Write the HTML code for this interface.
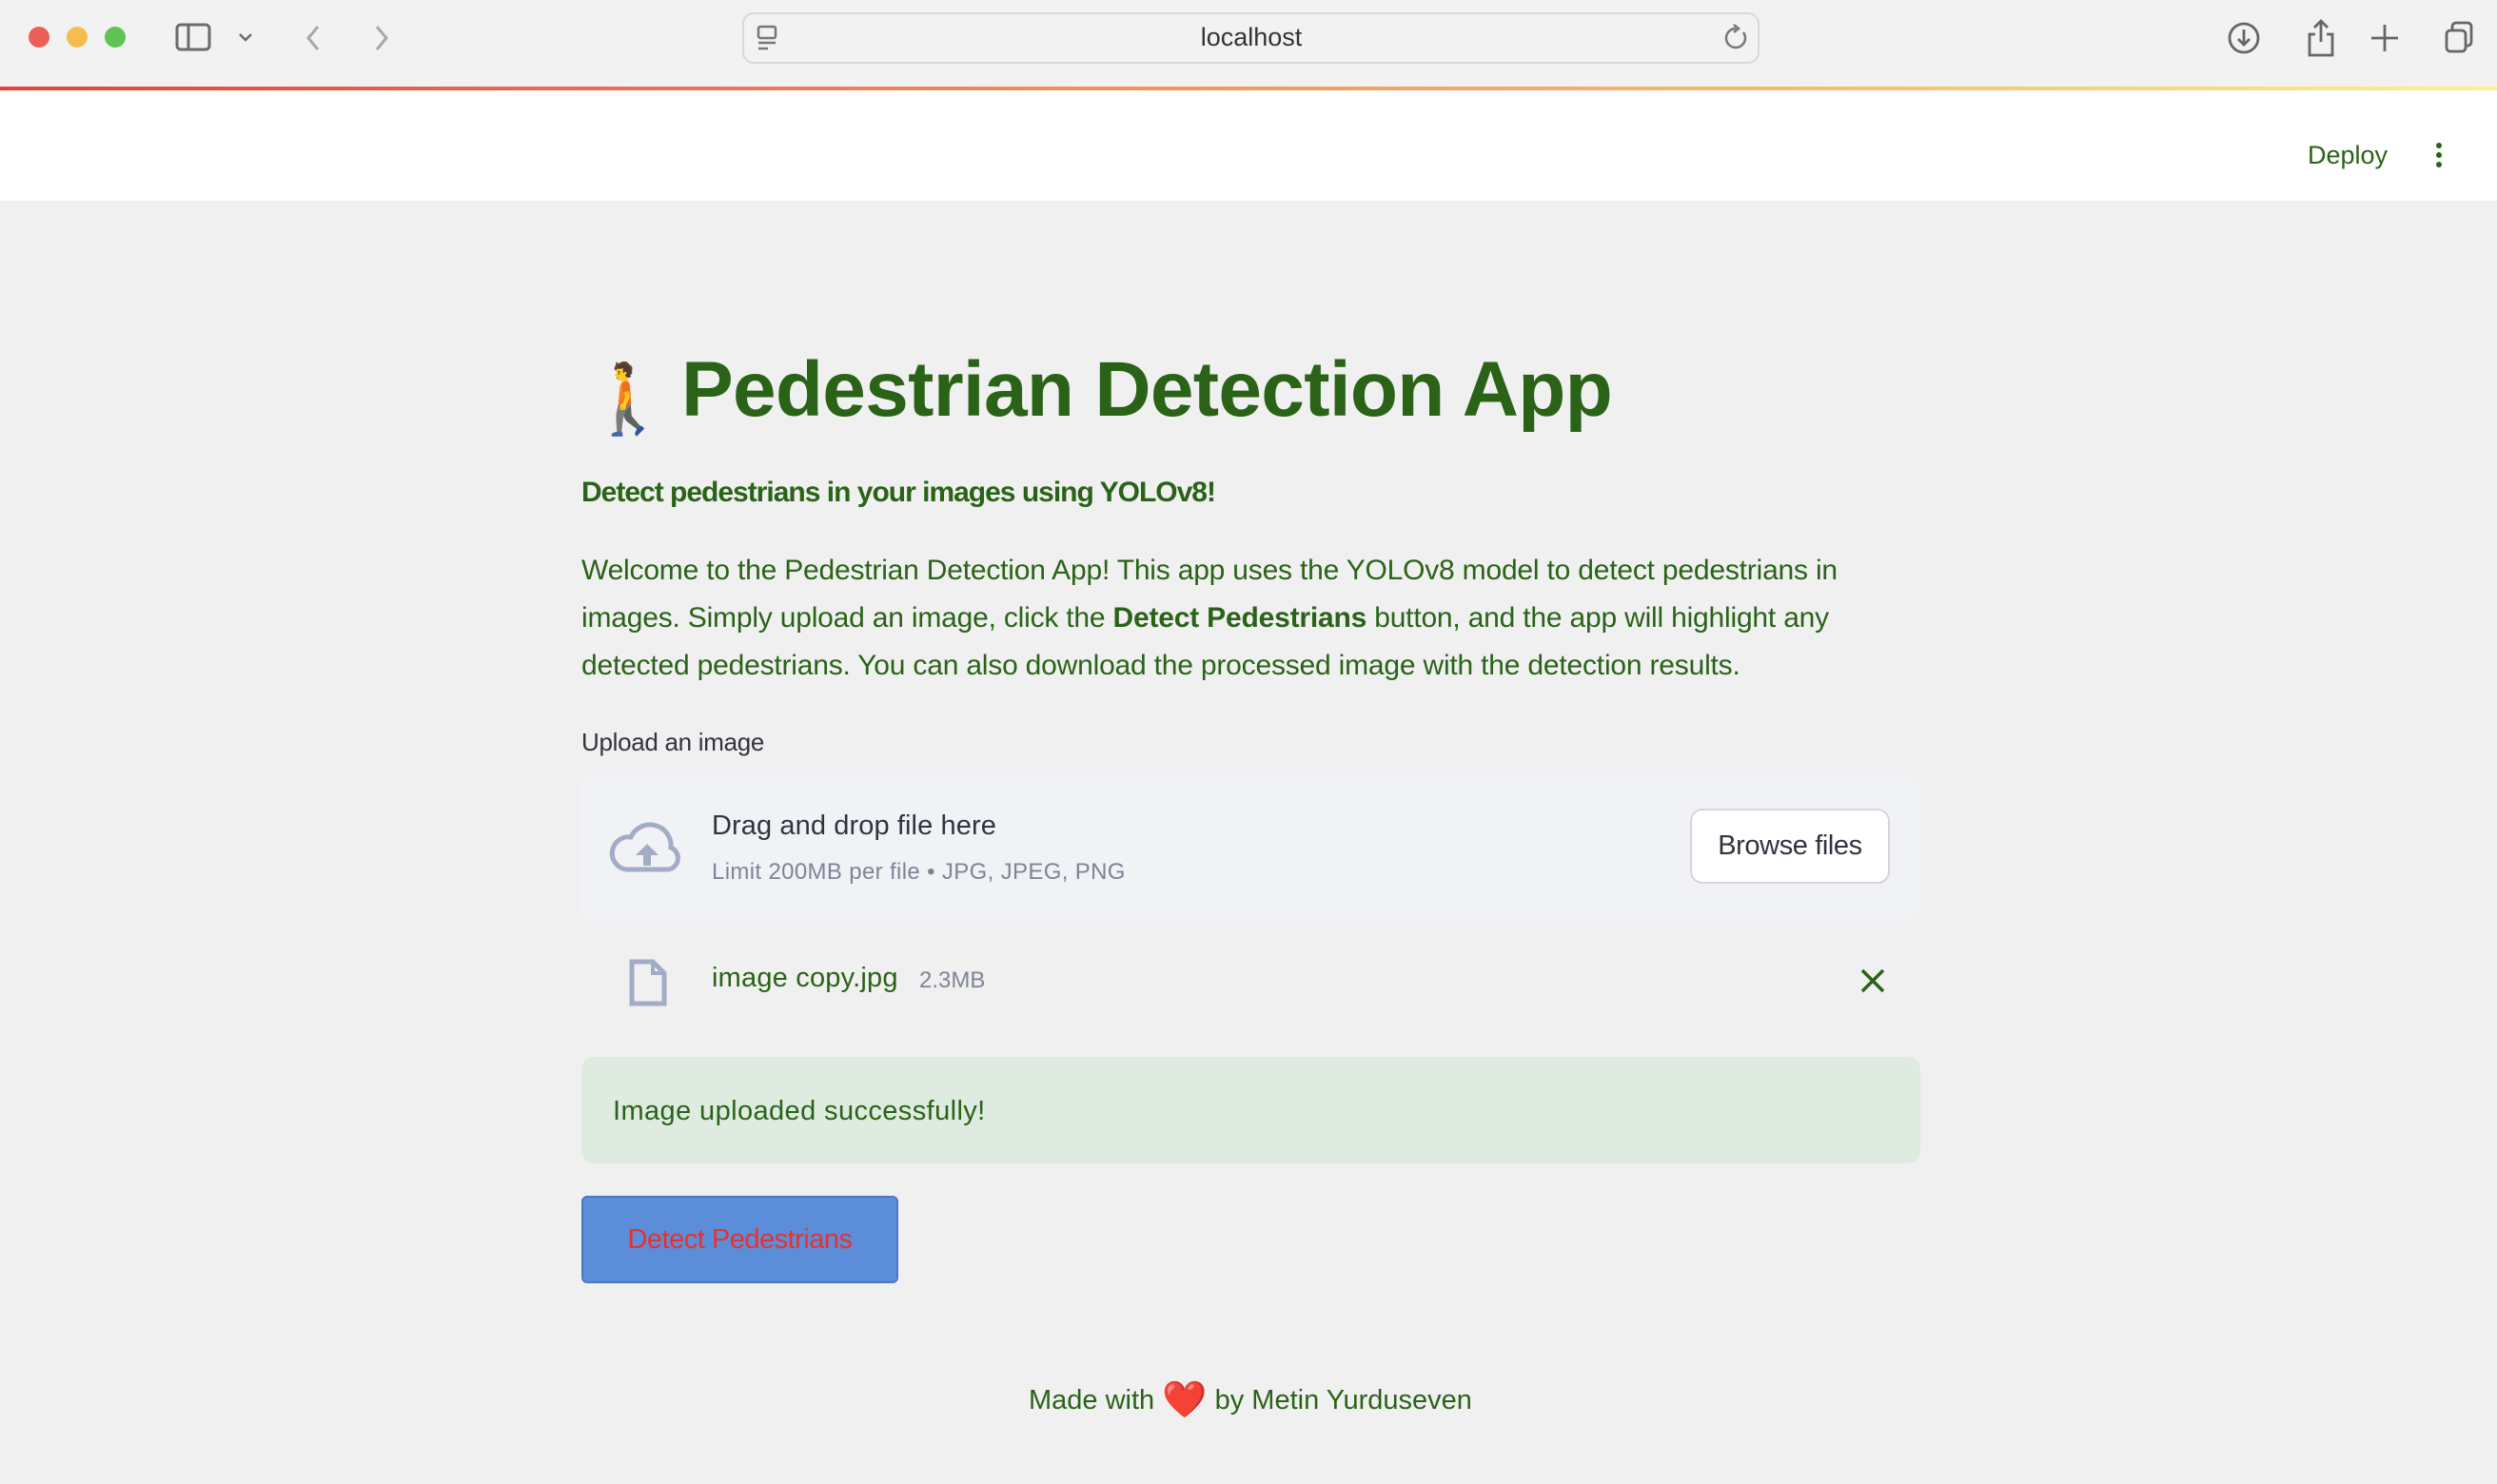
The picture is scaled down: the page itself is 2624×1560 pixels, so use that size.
<!DOCTYPE html>
<html><head><meta charset="utf-8"><style>
*{margin:0;padding:0;box-sizing:border-box}
body{width:2624px;height:1560px;overflow:hidden;background:#f0f0f0;font-family:"Liberation Sans",sans-serif;position:relative}
.a{position:absolute;white-space:nowrap}
.g{color:#2a6318}
</style></head><body>
<div class="a" style="left:0;top:0;width:2624px;height:92px;background:#f2f2f2"></div>
<div class="a" style="left:30px;top:28px;width:22px;height:22px;border-radius:50%;background:#ec5f57"></div>
<div class="a" style="left:70px;top:28px;width:22px;height:22px;border-radius:50%;background:#f4bd4f"></div>
<div class="a" style="left:110px;top:28px;width:22px;height:22px;border-radius:50%;background:#5fc454"></div>
<svg class="a" style="left:180px;top:20px" width="240" height="40" fill="none" stroke="#6b6b6b" stroke-width="3"><rect x="6" y="6" width="34" height="26" rx="4"/><line x1="18" y1="6" x2="18" y2="32"/><path d="M72 16l6 6 6-6" stroke-width="2.5"/><path d="M154 8l-10 12 10 12" stroke="#a8a8a8"/><path d="M216 8l10 12-10 12" stroke="#a8a8a8"/></svg>
<div class="a" style="left:780px;top:13px;width:1069px;height:54px;border:2px solid #d9d9d9;border-radius:12px;background:#f2f2f2"></div>
<svg class="a" style="left:794px;top:26px" width="30" height="30" fill="none" stroke="#777" stroke-width="2.5"><rect x="3" y="2" width="18" height="12" rx="2"/><line x1="3" y1="19" x2="21" y2="19"/><line x1="3" y1="25" x2="13" y2="25"/></svg>
<div class="a" style="left:1180px;top:24px;width:270px;text-align:center;font-size:27px;color:#333">localhost</div>
<svg class="a" style="left:1810px;top:24px" width="30" height="32" fill="none" stroke="#777" stroke-width="2.5"><path d="M22 10a10 10 0 1 1-8-4"/><path d="M12 2l5 4-5 4"/></svg>
<svg class="a" style="left:2335px;top:18px" width="280" height="44" fill="none" stroke="#666" stroke-width="2.8"><circle cx="23" cy="22" r="15"/><path d="M23 13v16M17 23l6 6 6-6"/><path d="M98 18h-6v22h24V18h-6M104 4v22M97 11l7-7 7 7"/><path d="M171 8v28M157 22h28"/><rect x="236" y="14" width="20" height="22" rx="4"/><path d="M242 14V10a4 4 0 0 1 4-4h12a4 4 0 0 1 4 4v16a4 4 0 0 1-4 4h-2"/></svg>
<div class="a" style="left:0;top:91px;width:2624px;height:4px;background:linear-gradient(90deg,#e8413b,#f08a5d 40%,#f5c26b 75%,#fbf38a)"></div>
<div class="a" style="left:0;top:95px;width:2624px;height:116px;background:#fff"></div>
<div class="a g" style="left:2425px;top:148px;font-size:27px">Deploy</div>
<div class="a" style="left:2560px;top:150px;width:6px;height:6px;border-radius:50%;background:#2a6318;box-shadow:0 10px 0 #2a6318,0 20px 0 #2a6318"></div>

<div class="a" style="left:615px;top:360px;font-size:72px;font-family:'Noto Sans CJK JP',sans-serif">🚶</div>
<div class="a g" style="left:716px;top:363px;font-size:82px;font-weight:bold;letter-spacing:-0.7px">Pedestrian Detection App</div>
<div class="a g" style="left:611px;top:501px;font-size:30px;font-weight:bold;letter-spacing:-1px">Detect pedestrians in your images using YOLOv8!</div>
<div class="a g" style="left:611px;top:575px;font-size:30px;line-height:50px;letter-spacing:-0.2px">Welcome to the Pedestrian Detection App! This app uses the YOLOv8 model to detect pedestrians in<br>images. Simply upload an image, click the <b>Detect Pedestrians</b> button, and the app will highlight any<br>detected pedestrians. You can also download the processed image with the detection results.</div>
<div class="a" style="left:611px;top:765px;font-size:26px;color:#31333f;letter-spacing:-0.3px">Upload an image</div>
<div class="a" style="left:611px;top:815px;width:1407px;height:152px;background:#f0f2f6;border-radius:13px"></div>
<svg class="a" style="left:640px;top:860px" width="80" height="60" fill="none" stroke="#a3acc5" stroke-width="5"><path d="M18 54h44a12 12 0 0 0 3-23A22 22 0 0 0 23 20 15 15 0 0 0 18 54z"/><path d="M40 27l-12 12h8v11h8V39h8z" fill="#a3acc5" stroke="none"/></svg>
<div class="a" style="left:748px;top:852px;font-size:29px;color:#31333f;letter-spacing:0.1px">Drag and drop file here</div>
<div class="a" style="left:748px;top:903px;font-size:24px;color:#808495;letter-spacing:0.35px">Limit 200MB per file • JPG, JPEG, PNG</div>
<div class="a" style="left:1776px;top:850px;width:210px;height:79px;background:#fff;border:2px solid #d6d6d9;border-radius:13px;font-size:29px;color:#31333f;text-align:center;line-height:75px;letter-spacing:-0.4px">Browse files</div>
<svg class="a" style="left:658px;top:1006px" width="46" height="54" fill="none" stroke="#a3acc5" stroke-width="5"><path d="M6 5h22l12 12v32H6z"/><path d="M28 5v12h12" stroke-width="4"/></svg>
<div class="a g" style="left:748px;top:1012px;font-size:29px;letter-spacing:0.2px">image copy.jpg</div>
<div class="a" style="left:966px;top:1017px;font-size:24px;color:#808495">2.3MB</div>
<svg class="a" style="left:1954px;top:1017px" width="28" height="28" stroke="#2a6318" stroke-width="3.5"><path d="M3 3l22 22M25 3L3 25"/></svg>
<div class="a" style="left:611px;top:1111px;width:1407px;height:112px;background:#dfebe0;border-radius:13px"></div>
<div class="a g" style="left:644px;top:1152px;font-size:29px;letter-spacing:0.4px">Image uploaded successfully!</div>
<div class="a" style="left:611px;top:1257px;width:333px;height:92px;background:#5b8dd9;border:2px solid #4a78c4;border-radius:6px;font-size:29px;color:#e8312c;text-align:center;line-height:88px;letter-spacing:-0.5px">Detect Pedestrians</div>
<div class="a g" style="left:1081px;top:1456px;font-size:29px;letter-spacing:0px">Made with <span style="font-size:38px;line-height:29px;vertical-align:-3px;font-family:'Noto Color Emoji','Noto Sans CJK JP',sans-serif">❤️</span> by Metin Yurduseven</div>
</body></html>
